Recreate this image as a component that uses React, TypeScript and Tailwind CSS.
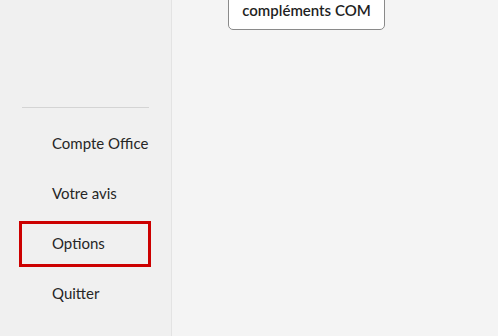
const items = ["Compte Office", "Votre avis", "Options", "Quitter"];

export default function App() {
  return (
    <div
      className="flex h-[336px] w-[498px] overflow-hidden"
      style={{ fontFamily: 'Lato, "Liberation Sans", sans-serif' }}
    >
      <aside className="flex w-[172px] shrink-0 flex-col border-r border-[#e3e3e3] bg-[#f0f0f0]">
        <div className="mx-[22px] mt-[107px] h-px bg-[#d4d4d4]" />
        <nav className="mt-[13px] flex flex-col gap-[4px]">
          {items.map((item) => (
            <div
              key={item}
              className={`ml-[19px] flex h-[46px] w-[132px] items-center whitespace-nowrap border-[3px] pb-[2px] pl-[30px] text-[15px] text-[#262626] ${
                item === "Options" ? "border-[#cc0000]" : "border-transparent"
              }`}
            >
              {item}
            </div>
          ))}
        </nav>
      </aside>
      <main className="flex-1 bg-[#f4f4f4]">
        <div className="ml-[56px] mt-[-12px] flex h-[42px] w-[157px] items-end justify-center rounded-[5px] border border-[#8a8a8a] bg-white pb-[9px]">
          <span className="whitespace-nowrap text-[15px] leading-[20px] font-semibold text-[#1f1f1f]">
            compléments COM
          </span>
        </div>
      </main>
    </div>
  );
}
